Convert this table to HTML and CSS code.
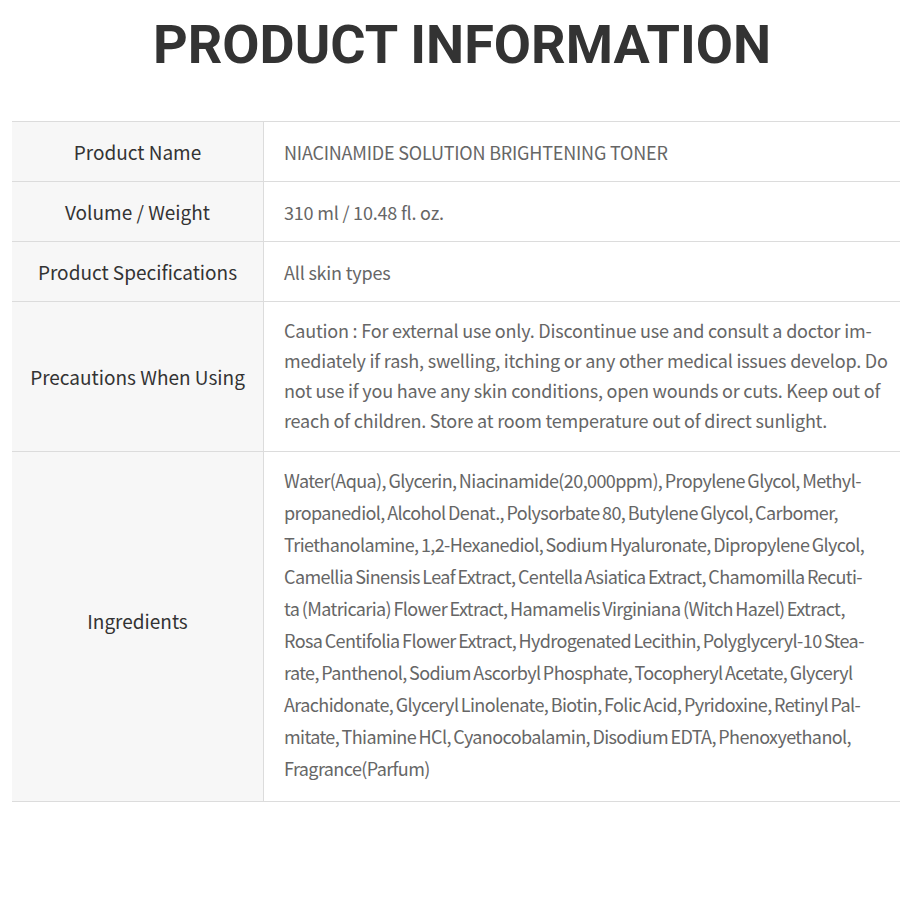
FILE: index.html
```html
<!DOCTYPE html>
<html>
<head>
<meta charset="utf-8">
<link rel="stylesheet" href="styles.css">
</head>
<body>
<h1 class="title">PRODUCT INFORMATION</h1>
<div class="table">
  <div class="row">
    <div class="label">Product Name</div>
    <div class="value">NIACINAMIDE SOLUTION BRIGHTENING TONER</div>
  </div>
  <div class="row">
    <div class="label">Volume / Weight</div>
    <div class="value">310 ml / 10.48 fl. oz.</div>
  </div>
  <div class="row">
    <div class="label">Product Specifications</div>
    <div class="value">All skin types</div>
  </div>
  <div class="row">
    <div class="label">Precautions When Using</div>
    <div class="value multi">Caution : For external use only. Discontinue use and consult a doctor im-<br>mediately if rash, swelling, itching or any other medical issues develop. Do<br>not use if you have any skin conditions, open wounds or cuts. Keep out of<br>reach of children. Store at room temperature out of direct sunlight.</div>
  </div>
  <div class="row">
    <div class="label label-high">Ingredients</div>
    <div class="value tall">Water(Aqua), Glycerin, Niacinamide(20,000ppm), Propylene Glycol, Methyl-<br>propanediol, Alcohol Denat., Polysorbate 80, Butylene Glycol, Carbomer,<br>Triethanolamine, 1,2-Hexanediol, Sodium Hyaluronate, Dipropylene Glycol,<br>Camellia Sinensis Leaf Extract, Centella Asiatica Extract, Chamomilla Recuti-<br>ta (Matricaria) Flower Extract, Hamamelis Virginiana (Witch Hazel) Extract,<br>Rosa Centifolia Flower Extract, Hydrogenated Lecithin, Polyglyceryl-10 Stea-<br>rate, Panthenol, Sodium Ascorbyl Phosphate, Tocopheryl Acetate, Glyceryl<br>Arachidonate, Glyceryl Linolenate, Biotin, Folic Acid, Pyridoxine, Retinyl Pal-<br>mitate, Thiamine HCl, Cyanocobalamin, Disodium EDTA, Phenoxyethanol,<br>Fragrance(Parfum)</div>
  </div>
</div>
</body>
</html>
```
FILE: styles.css
```css
html, body {
  margin: 0;
  padding: 0;
  background: #fff;
}
body {
  font-family: "Noto Sans CJK KR", "Noto Sans", sans-serif;
}
.title {
  margin: 0;
  padding: 10px 0 0 24px;
  height: 110px;
  box-sizing: border-box;
  text-align: center;
  font-family: Roboto, "Liberation Sans", sans-serif;
  font-weight: 700;
  font-size: 54px;
  line-height: 70px;
  color: #333;
}
.table {
  margin-left: 12px;
  margin-top: 11px;
  border-top: 1px solid #dcdcdc;
}
.row {
  display: grid;
  grid-template-columns: 252px 1fr;
  border-bottom: 1px solid #dcdcdc;
}
.label {
  background: #f7f7f7;
  border-right: 1px solid #dcdcdc;
  display: flex;
  align-items: center;
  justify-content: center;
  text-align: center;
  font-size: 19px;
  color: #333;
  line-height: 30px;
}
.label-high {
  padding-bottom: 12px;
}
.value {
  padding: 15px 0 14px 20px;
  font-size: 18px;
  line-height: 30px;
  color: #666;
  white-space: nowrap;
  letter-spacing: -0.2px;
}
.value.multi {
  padding: 13px 0 16px 20px;
}
.value.tall {
  line-height: 32px;
  padding: 12px 0 17px 20px;
  letter-spacing: -0.6px;
  word-spacing: -1px;
}
```
